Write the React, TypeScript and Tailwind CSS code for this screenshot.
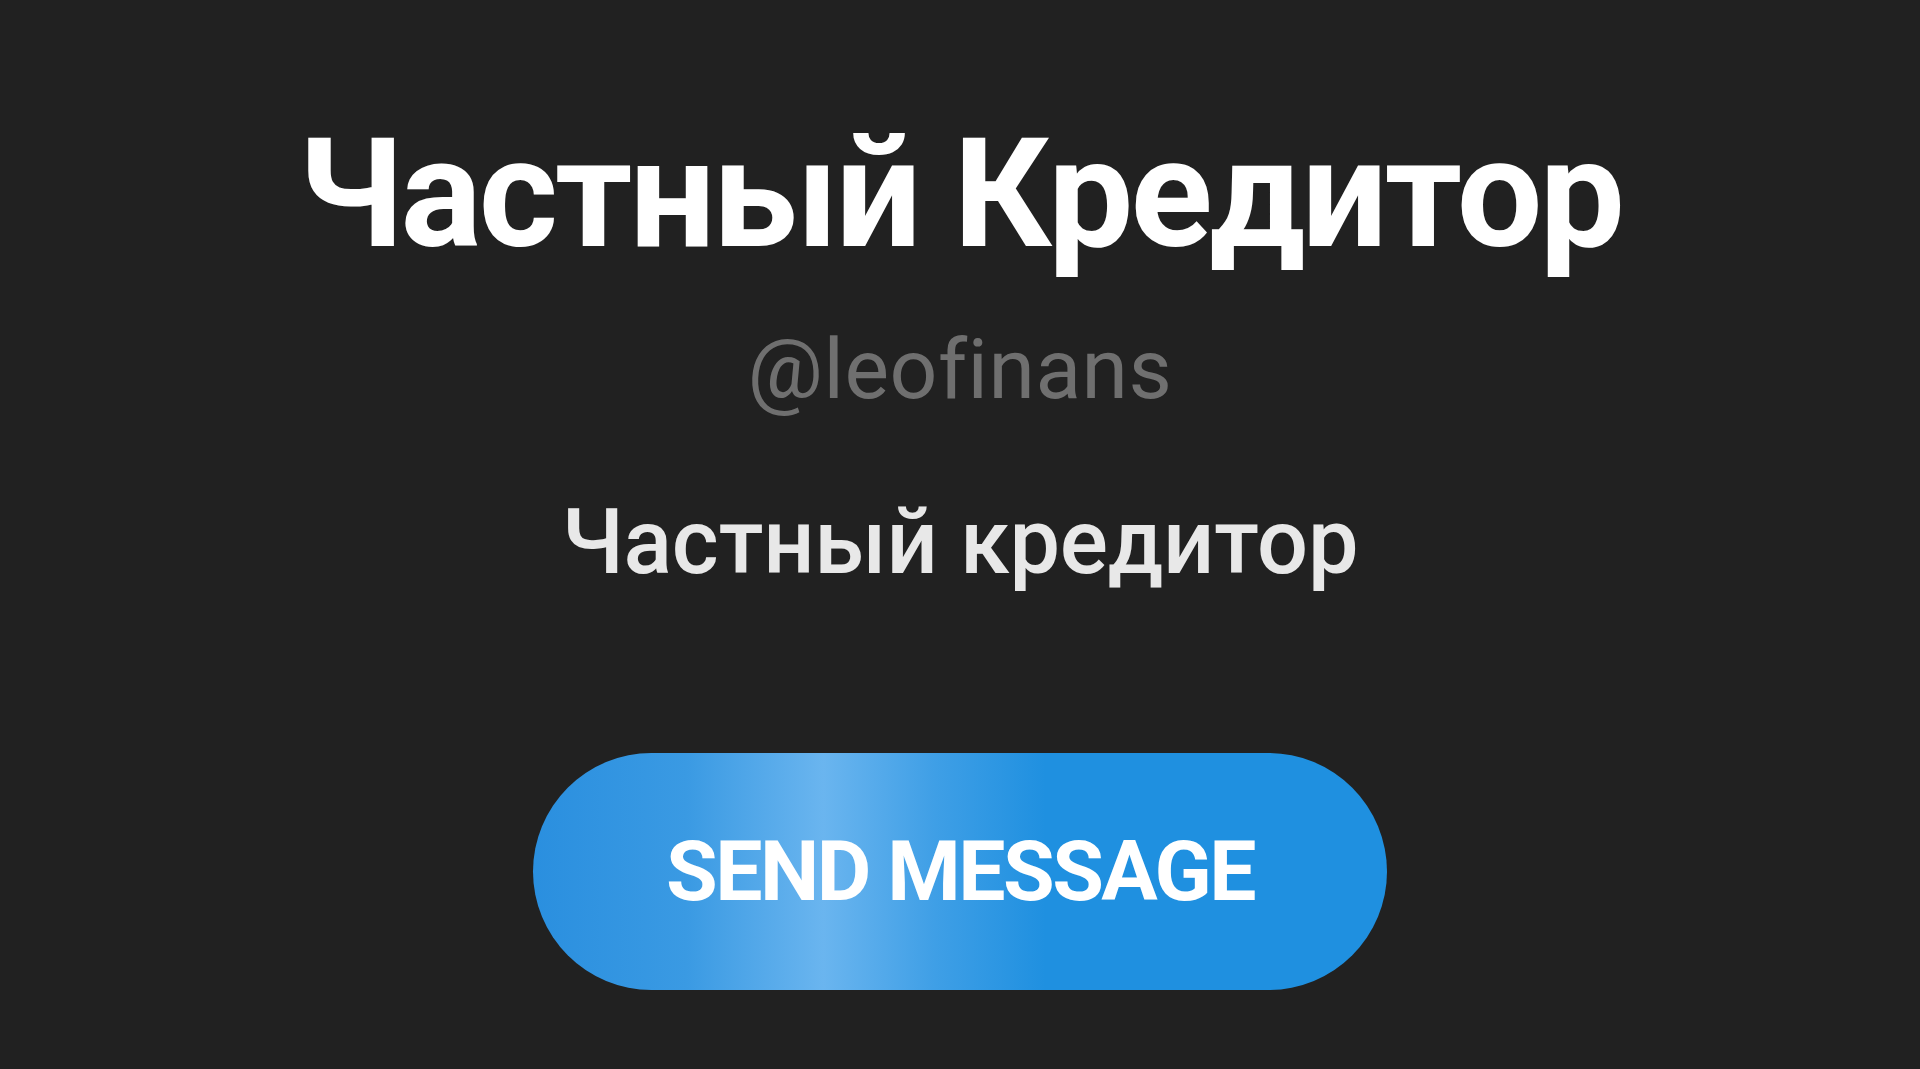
const App = () => {
    return (
        <div className="min-h-screen w-full bg-[#212121] flex flex-col items-center pt-[118px] font-['Roboto',sans-serif]">
            <h1 className="text-[152px] font-bold leading-none tracking-[-3px] text-white whitespace-nowrap">
                Частный Кредитор
            </h1>
            <div className="mt-[58px] text-[84px] leading-none tracking-[0.5px] text-[#6f6f6f]">
                @leofinans
            </div>
            <div className="mt-[86px] text-[90px] font-medium leading-none tracking-[-0.2px] text-[#e8e8e8]">
                Частный кредитор
            </div>
            <a
                href="#"
                className="mt-[165px] flex h-[237px] w-[854px] items-center justify-center rounded-full bg-[linear-gradient(90deg,#2a8fdf_0%,#3a9ae3_18%,#6ab5ef_34%,#3f9fe6_47%,#1f90e0_60%,#1f90e0_100%)] text-[84px] font-bold uppercase tracking-[-2.5px] text-white"
            >
                Send Message
            </a>
        </div>
    );
};
export default App
